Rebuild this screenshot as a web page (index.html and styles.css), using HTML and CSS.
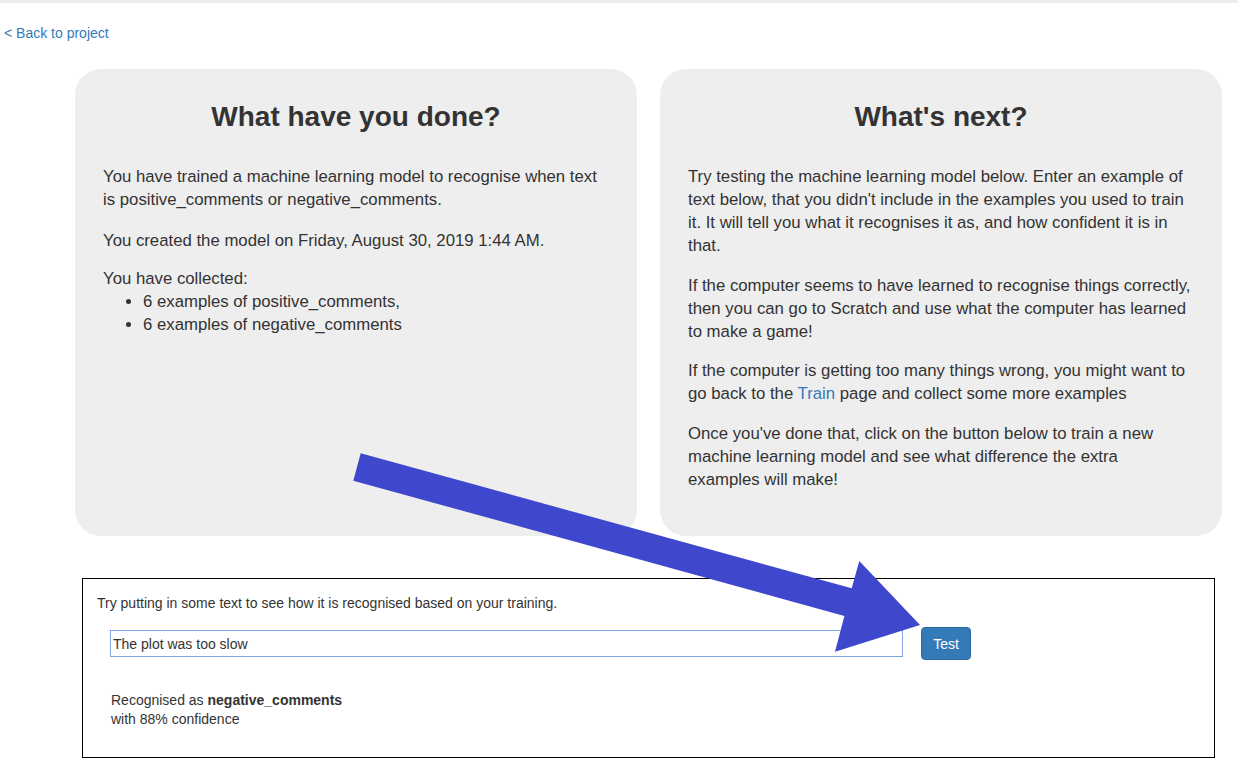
FILE: index.html
```html
<!DOCTYPE html>
<html lang="en">
<head>
<meta charset="utf-8">
<title>Learn &amp; Test</title>
<link rel="stylesheet" href="styles.css">
</head>
<body>
<div class="topbar"></div>
<div class="backrow"><a class="backlink" href="#">&lt; Back to project</a></div>
<div class="cards">
  <section class="card">
    <h2 class="card-title">What have you done?</h2>
    <p class="para">You have trained a machine learning model to recognise when text is positive_comments or negative_comments.</p>
    <p class="para para-wide">You created the model on Friday, August 30, 2019 1:44 AM.</p>
    <div class="collected">You have collected:
      <ul class="list">
        <li>6 examples of positive_comments,</li>
        <li>6 examples of negative_comments</li>
      </ul>
    </div>
  </section>
  <section class="card">
    <h2 class="card-title">What's next?</h2>
    <p class="para">Try testing the machine learning model below. Enter an example of text below, that you didn't include in the examples you used to train it. It will tell you what it recognises it as, and how confident it is in that.</p>
    <p class="para">If the computer seems to have learned to recognise things correctly, then you can go to Scratch and use what the computer has learned to make a game!</p>
    <p class="para">If the computer is getting too many things wrong, you might want to go back to the <a class="inlink" href="#">Train</a> page and collect some more examples</p>
    <p class="para">Once you've done that, click on the button below to train a new machine learning model and see what difference the extra examples will make!</p>
  </section>
</div>
<div class="testbox">
  <div class="intro">Try putting in some text to see how it is recognised based on your training.</div>
  <div class="testrow">
    <input class="testinput" type="text" value="The plot was too slow">
    <button class="testbtn">Test</button>
  </div>
  <div class="result">
    <div>Recognised as <strong>negative_comments</strong></div>
    <div>with 88% confidence</div>
  </div>
</div>
<svg class="arrow" width="1238" height="774" viewBox="0 0 1238 774" xmlns="http://www.w3.org/2000/svg">
  <polygon fill="#3f48cc" points="360.7,453.3 851.7,588.3 859.3,561 920,625 835,651.7 844.4,615.9 353.3,480.7"/>
</svg>
</body>
</html>
```

FILE: styles.css
```css
html, body {
  margin: 0;
  padding: 0;
  background: #fff;
}
body {
  font-family: "Liberation Sans", Arial, sans-serif;
  color: #333;
  font-size: 14px;
  position: relative;
  width: 1238px;
  height: 774px;
  overflow: hidden;
}
.topbar {
  height: 3px;
  background: #eeeeee;
}
.backrow {
  margin-top: 20px;
  padding-left: 4px;
  line-height: 20px;
  height: 20px;
}
.backlink {
  color: #337ab7;
  text-decoration: none;
  font-size: 14px;
}
.cards {
  display: flex;
  gap: 23px;
  margin-top: 26px;
  margin-left: 75px;
}
.card {
  width: 562px;
  height: 467px;
  box-sizing: border-box;
  background: #eeeeee;
  border-radius: 26px;
  padding: 32px 28px 0 28px;
}
.card-title {
  margin: 0;
  font-size: 28px;
  font-weight: bold;
  line-height: 32px;
  text-align: center;
  color: #333;
}
.para {
  margin: 32px 0 0 0;
  font-size: 16.75px;
  line-height: 23px;
}
.para + .para {
  margin-top: 16.5px;
}
.para + .para-wide {
  margin-top: 18px;
}
.collected {
  margin-top: 15px;
  font-size: 16.75px;
  line-height: 23px;
}
.list {
  margin: 0;
  padding-left: 40px;
}
.inlink {
  color: #337ab7;
  text-decoration: none;
}
.testbox {
  margin-top: 42px;
  margin-left: 82px;
  width: 1133px;
  height: 180px;
  box-sizing: border-box;
  border: 1px solid #000;
  padding: 14px 14px;
}
.intro {
  font-size: 14px;
  line-height: 20px;
}
.testrow {
  display: flex;
  align-items: center;
  gap: 18px;
  margin-top: 14px;
  margin-left: 13px;
}
.testinput {
  width: 793px;
  height: 27px;
  box-sizing: border-box;
  border: 1px solid #7ea6e3;
  padding: 0 2px;
  margin: 0;
  font-family: "Liberation Sans", Arial, sans-serif;
  font-size: 14px;
  color: #333;
  outline: none;
  border-radius: 0;
  background: #fff;
}
.testbtn {
  width: 50px;
  height: 33px;
  box-sizing: border-box;
  background: #337ab7;
  border: 1px solid #2e6da4;
  border-radius: 4px;
  color: #fff;
  font-family: "Liberation Sans", Arial, sans-serif;
  font-size: 14px;
  padding: 0;
  margin: 0;
}
.result {
  margin-top: 31px;
  margin-left: 14px;
  font-size: 14px;
  line-height: 19px;
}
.arrow {
  position: absolute;
  top: 0;
  left: 0;
  pointer-events: none;
}
```
